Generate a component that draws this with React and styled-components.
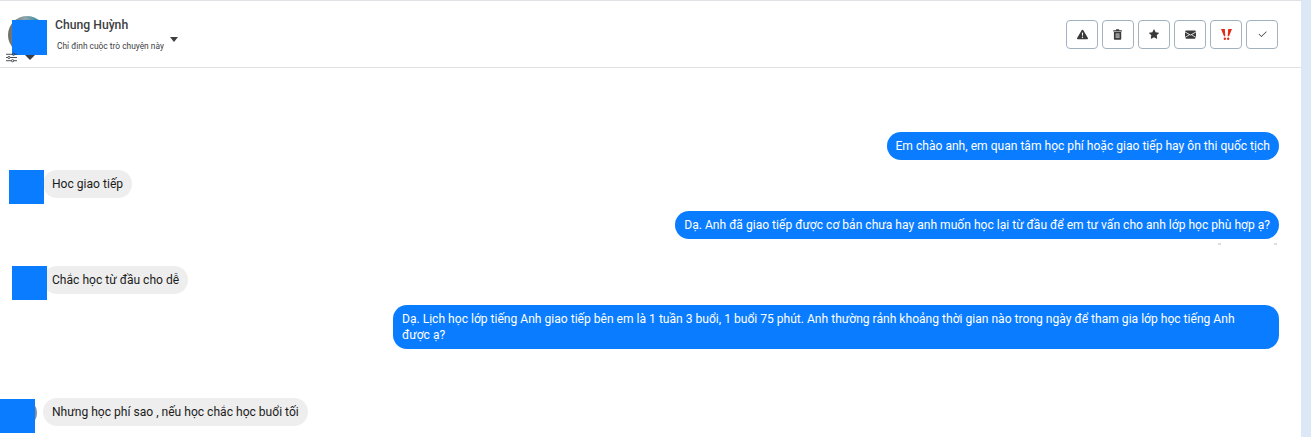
import React from 'react';
import styled, { createGlobalStyle } from 'styled-components';
import { BsExclamationTriangleFill, BsStarFill, BsEnvelopeFill, BsCheck2 } from 'react-icons/bs';

const messages = [
    { id: 1, mine: true, top: 64, text: 'Em chào anh, em quan tâm học phí hoặc giao tiếp hay ôn thi quốc tịch' },
    { id: 2, top: 10, coverLeft: 9, coverTop: 0, text: 'Hoc giao tiếp' },
    { id: 3, mine: true, top: 13, specks: true, text: 'Dạ. Anh đã giao tiếp được cơ bản chưa hay anh muốn học lại từ đầu để em tư vấn cho anh lớp học phù hợp ạ?' },
    { id: 4, top: 27, coverLeft: 12, coverTop: 0, text: 'Chắc học từ đầu cho dễ' },
    { id: 5, mine: true, top: 11, wide: true, text: 'Dạ. Lịch học lớp tiếng Anh giao tiếp bên em là 1 tuần 3 buổi, 1 buổi 75 phút. Anh thường rảnh khoảng thời gian nào trong ngày để tham gia lớp học tiếng Anh được ạ?' },
    { id: 6, top: 49, coverLeft: 0, coverTop: 1, peek: true, text: 'Nhưng học phí sao , nếu học chắc học buổi tối' },
];

export default function App(){
    return(
        <Page>
            <GlobalStyle />
            <Panel>
                <Header>
                    <Contact>
                        <Avatar />
                        <Cover />
                        <FilterIcon viewBox="0 0 12 12">
                            <path d="M0 2.500h7M9.500 2.500H12M0 6h2M4.500 6H12M0 9.500h6M8.500 9.500H12" stroke="#3a3f45" strokeWidth="1" fill="none" />
                            <circle cx="8.200" cy="2.500" r="1.200" fill="none" stroke="#3a3f45" />
                            <circle cx="3.200" cy="6" r="1.200" fill="none" stroke="#3a3f45" />
                            <circle cx="7.200" cy="9.500" r="1.200" fill="none" stroke="#3a3f45" />
                        </FilterIcon>
                        <SmallCaret />
                        <ContactText>
                            <ContactName>Chung Huỳnh</ContactName>
                            <AssignRow>
                                <AssignLabel>Chỉ định cuộc trò chuyện này</AssignLabel>
                                <Caret />
                            </AssignRow>
                        </ContactText>
                    </Contact>
                    <Actions>
                        <ActionButton><BsExclamationTriangleFill size={11} /></ActionButton>
                        <ActionButton>
                            <ActionIcon viewBox="0 0 10 12">
                                <path fillRule="evenodd" d="M3.500 0.300h3L7 1.300h2.700v1.500H0.300V1.300H3zM1 3.400h8v7.200c0 .7-.5 1.200-1.200 1.200H2.200c-.7 0-1.200-.5-1.200-1.200zM3 5v4.700h4V5z" />
                                <path d="M3 5h4v4.700H3z" opacity="0.55" />
                            </ActionIcon>
                        </ActionButton>
                        <ActionButton><BsStarFill size={10} /></ActionButton>
                        <ActionButton><BsEnvelopeFill size={11} /></ActionButton>
                        <ActionButton $danger>
                            <ActionIcon viewBox="0 0 10 10">
                                <path d="M0 0h3.500L3.900 6.600H2.700zM6.500 0H10L7.300 6.600H6.100z" />
                                <circle cx="3.500" cy="8.800" r="1.100" />
                                <circle cx="6.500" cy="8.800" r="1.100" />
                            </ActionIcon>
                        </ActionButton>
                        <ActionButton><BsCheck2 size={11} /></ActionButton>
                    </Actions>
                </Header>
                <Thread>
                    {messages.map((message) => (
                        <Row key={message.id} $mine={message.mine} $top={message.top}>
                            {message.peek && <RowAvatar />}
                            <Bubble $mine={message.mine} $wide={message.wide}>{message.text}</Bubble>
                            {!message.mine && <AvatarCover $left={message.coverLeft} $top={message.coverTop} />}
                            {message.specks && <Speck $right={58} />}
                            {message.specks && <Speck $right={2} />}
                        </Row>
                    ))}
                </Thread>
            </Panel>
            <Strip />
        </Page>
    );
}

const GlobalStyle = createGlobalStyle`
    html, body {
        margin: 0;
        height: 100%;
        overflow: hidden;
        background: #fff;
    }
`;

const Page = styled.div`
    display: flex;
    height: 437px;
    width: 1311px;
    overflow: hidden;
    font-family: Roboto, "Noto Sans", sans-serif;
`;

const Panel = styled.div`
    flex: 1;
    min-width: 0;
    border-top: 1px solid #dfe1e5;
`;

const Strip = styled.div`
    width: 10px;
    background: #dde8f6;
`;

const Header = styled.div`
    display: flex;
    justify-content: space-between;
    align-items: center;
    height: 66px;
    padding-right: 23px;
    border-bottom: 1px solid #dfe1e5;
`;

const Contact = styled.div`
    position: relative;
    display: flex;
    padding: 16px 0 0 55px;
    align-self: stretch;
`;

const Avatar = styled.div`
    position: absolute;
    left: 8px;
    top: 15px;
    width: 38px;
    height: 38px;
    border-radius: 50%;
    background: linear-gradient(90deg, #6d6a66 0%, #8fa7ad 45%, #3f8fa3 75%, #7c9aa8 100%);
`;

const Cover = styled.div`
    position: absolute;
    left: 12px;
    top: 19px;
    width: 35px;
    height: 35px;
    background: #0a7cff;
`;

const FilterIcon = styled.svg`
    position: absolute;
    left: 6px;
    top: 51px;
    width: 11px;
    height: 11px;
`;

const SmallCaret = styled.div`
    position: absolute;
    left: 25px;
    top: 54px;
    border-left: 5px solid transparent;
    border-right: 5px solid transparent;
    border-top: 5px solid #3a3f45;
`;

const ContactText = styled.div`
    display: flex;
    flex-direction: column;
    gap: 3px;
`;

const ContactName = styled.div`
    font-size: 12.2px;
    font-weight: 500;
    line-height: 17px;
    color: #3c4043;
`;

const AssignRow = styled.div`
    display: flex;
    align-items: flex-start;
    gap: 6px;
`;

const AssignLabel = styled.div`
    padding: 3px 0 0 2px;
    font-size: 8.4px;
    line-height: 12px;
    color: #3c4043;
`;

const Caret = styled.div`
    border-left: 4.5px solid transparent;
    border-right: 4.5px solid transparent;
    border-top: 5.5px solid #3c4043;
`;

const Actions = styled.div`
    display: flex;
    gap: 4px;
`;

const ActionButton = styled.button`
    display: flex;
    align-items: center;
    justify-content: center;
    width: 32px;
    height: 29px;
    padding: 0;
    background: #fff;
    border: 1px solid #a3b2bf;
    border-radius: 4px;
    color: ${({ $danger }) => ($danger ? '#e02d1b' : '#3a3a3a')};
`;

const ActionIcon = styled.svg`
    height: 11px;
    fill: currentColor;
`;

const Thread = styled.div`
    display: flex;
    flex-direction: column;
    padding-right: 22px;
`;

const Row = styled.div`
    position: relative;
    display: flex;
    justify-content: ${({ $mine }) => ($mine ? 'flex-end' : 'flex-start')};
    margin-top: ${({ $top }) => $top}px;
    padding-left: ${({ $mine }) => ($mine ? 0 : 43)}px;
`;

const RowAvatar = styled.div`
    position: absolute;
    left: 9px;
    top: 1px;
    width: 28px;
    height: 28px;
    border-radius: 50%;
    background: #8a9299;
`;

const AvatarCover = styled.div`
    position: absolute;
    left: ${({ $left }) => $left}px;
    top: ${({ $top }) => $top}px;
    width: 35px;
    height: 34px;
    background: #0a7cff;
`;

const Speck = styled.div`
    position: absolute;
    right: ${({ $right }) => $right}px;
    bottom: -6px;
    width: 3px;
    height: 2px;
    background: #dddddd;
`;

const Bubble = styled.div`
    box-sizing: border-box;
    max-width: 886px;
    width: ${({ $wide }) => ($wide ? '886px' : 'auto')};
    padding: 6px ${({ $wide }) => ($wide ? '30px' : '9px')} 6px 9px;
    border-radius: 14px;
    font-size: 12.08px;
    line-height: 16px;
    background: ${({ $mine }) => ($mine ? '#0a7cff' : '#eeeeee')};
    color: ${({ $mine }) => ($mine ? '#fff' : '#1c1c1c')};
`;
